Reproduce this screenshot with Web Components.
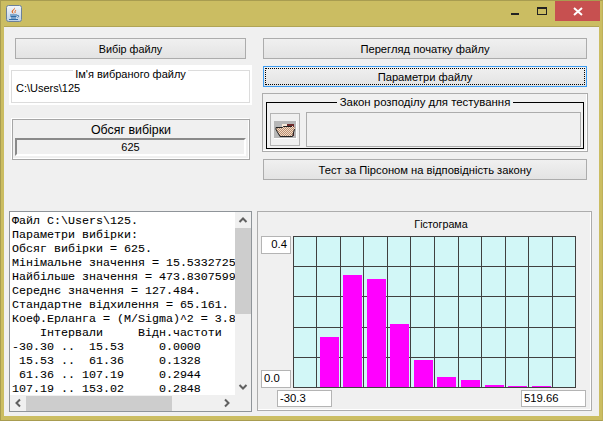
<!DOCTYPE html>
<html>
<head>
<meta charset="utf-8">
<title>Тест за Пірсоном</title>
<style>
  html, body { margin: 0; height: 100%; background: #f0f0f0; }
  body { font: 11px "Liberation Sans", Arial, sans-serif; color: #000; overflow: hidden; }
</style>
</head>
<body>
<app-window>
  <div slot="left">
    <swing-button class="pick">Вибір файлу</swing-button>
    <file-panel label="Ім'я вибраного файлу">C:\Users\125</file-panel>
    <size-panel label="Обсяг вибірки" value="625"></size-panel>
  </div>
  <div slot="right">
    <swing-button>Перегляд початку файлу</swing-button>
    <swing-button focused>Параметри файлу</swing-button>
    <law-panel label="Закон розподілу для тестування"></law-panel>
    <swing-button>Тест за Пірсоном на відповідність закону</swing-button>
  </div>
  <log-view slot="log"></log-view>
  <histogram-panel slot="chart" label="Гістограма"></histogram-panel>
</app-window>

<script>
  class AppWindow extends HTMLElement {
    constructor() {
      super();
      this.attachShadow({ mode: 'open' });
      this.shadowRoot.innerHTML = `
        <style>
          :host {
            display: flex;
            flex-direction: column;
            box-sizing: border-box;
            width: 603px;
            height: 421px;
            background: #cbbd62;
            border: 1px solid #a89c50;
            border-right-color: #bdb05a;
          }
          .titlebar {
            display: flex;
            justify-content: space-between;
            height: 25px;
            flex: none;
          }
          .app-icon { margin: 4px 0 0 5px; }
          .controls { display: flex; align-items: flex-start; margin-right: 2px; }
          .min { width: 8px; height: 2px; margin: 12px 18px 0 0; background: #222; }
          .max {
            box-sizing: border-box;
            width: 10px;
            height: 8px;
            margin: 6px 8px 0 0;
            border: 1px solid #222;
            border-top-width: 2px;
          }
          .close {
            display: flex;
            align-items: center;
            justify-content: center;
            width: 45px;
            height: 20px;
            background: #c75050;
          }
          .client {
            flex: 1;
            margin: 0 3px 4px 3px;
            padding: 11px 0 0 5px;
            background: #f0f0f0;
            border-top: 1px solid #b0a455;
            box-sizing: border-box;
          }
          .top { display: flex; gap: 10px; height: 173px; }
          .bottom { display: flex; gap: 5px; }
          ::slotted([slot=left]) { display: block; width: 243px; }
          ::slotted([slot=right]) { display: block; width: 326px; }
        </style>
        <div class="titlebar">
          <svg class="app-icon" width="16" height="17" viewBox="0 0 16 17">
            <defs>
              <linearGradient id="tile" x1="0" y1="0" x2="0" y2="1">
                <stop offset="0" stop-color="#f4f7fb"/>
                <stop offset="1" stop-color="#bcd0e6"/>
              </linearGradient>
            </defs>
            <rect x="0.5" y="0.5" width="15" height="16" rx="2" fill="url(#tile)" stroke="#6c8198"/>
            <path d="M8.5 2.5C10 4.5 6 5.5 7 7.5C7.5 8.5 8.5 8.8 8.5 9C7 8.5 5 7.5 5.7 6C6.3 4.8 8.5 4.2 8.5 2.5Z" fill="#e0641e"/>
            <path d="M10 5C9.2 6 8.6 6.6 9.2 8" fill="none" stroke="#e0641e"/>
            <path d="M4 10H11M4.5 11.5H10.5M5 13H10M3 14.5H12" stroke="#2f6ca8" fill="none"/>
            <path d="M11 10.5C13 10 13.5 11.5 11.5 12.5" stroke="#2f6ca8" fill="none"/>
          </svg>
          <div class="controls">
            <div class="min"></div>
            <div class="max"></div>
            <div class="close">
              <svg width="10" height="9" viewBox="0 0 10 9">
                <path d="M1 1L9 8M9 1L1 8" stroke="#fff" stroke-width="2" fill="none"/>
              </svg>
            </div>
          </div>
        </div>
        <div class="client">
          <div class="top">
            <slot name="left"></slot>
            <slot name="right"></slot>
          </div>
          <div class="bottom">
            <slot name="log"></slot>
            <slot name="chart"></slot>
          </div>
        </div>
      `;
    }
  }

  class SwingButton extends HTMLElement {
    constructor() {
      super();
      this.attachShadow({ mode: 'open' });
      this.shadowRoot.innerHTML = `
        <style>
          :host {
            display: flex;
            align-items: center;
            justify-content: center;
            box-sizing: border-box;
            height: 21px;
            margin: 0 1px 7px 1px;
            border: 1px solid #acacac;
            background: linear-gradient(#f0f0f0, #e3e3e3);
            position: relative;
            font-size: 11.2px;
          }
          :host(.pick) { margin: 0 6px 6px 6px; font-size: 10.8px; }
          :host([focused]) { border-color: #3c9bf0; margin-bottom: 6px; }
          .focus { display: none; }
          :host([focused]) .focus {
            display: block;
            position: absolute;
            inset: 1px;
            border: 1px dotted #000;
          }
        </style>
        <div class="focus"></div>
        <slot></slot>
      `;
    }
  }

  class FilePanel extends HTMLElement {
    constructor() {
      super();
      this.attachShadow({ mode: 'open' });
      this.shadowRoot.innerHTML = `
        <style>
          :host {
            display: block;
            box-sizing: border-box;
            height: 40px;
            padding: 5px 2px 2px;
            background: #fff;
          }
          .box {
            position: relative;
            box-sizing: border-box;
            height: 33px;
            padding: 11px 0 0 4px;
            border: 1px solid #dcdcdc;
          }
          .legend {
            position: absolute;
            top: -4px;
            left: 0;
            right: 0;
            text-align: center;
            line-height: 14px;
          }
          .legend span { background: #fff; padding: 0 2px; }
        </style>
        <div class="box">
          <div class="legend"><span>${this.getAttribute('label')}</span></div>
          <slot></slot>
        </div>
      `;
    }
  }

  class SizePanel extends HTMLElement {
    constructor() {
      super();
      this.attachShadow({ mode: 'open' });
      this.shadowRoot.innerHTML = `
        <style>
          :host {
            display: block;
            box-sizing: border-box;
            height: 41px;
            margin: 14px 2px 0 3px;
            padding: 0 2px 0 2px;
            border: 1px solid #a6a6a6;
            box-shadow: -1px -1px 0 #fff, inset -1px -1px 0 #fff;
          }
          .label { height: 18px; line-height: 20px; text-align: center; font-size: 12.4px; }
          .bar {
            box-sizing: border-box;
            height: 18px;
            margin-right: 1px;
            line-height: 15px;
            text-align: center;
            border: 2px solid;
            border-color: #8a8a8a #fff #fff #8a8a8a;
          }
        </style>
        <div class="label">${this.getAttribute('label')}</div>
        <div class="bar">${this.getAttribute('value')}</div>
      `;
    }
  }

  class LawPanel extends HTMLElement {
    constructor() {
      super();
      this.attachShadow({ mode: 'open' });
      this.shadowRoot.innerHTML = `
        <style>
          :host {
            display: block;
            box-sizing: border-box;
            height: 59px;
            margin-bottom: 7px;
            padding: 8px 3px 0 3px;
            border: 1px solid #acacac;
            box-shadow: inset -1px -1px 0 #fff;
          }
          .box {
            position: relative;
            display: flex;
            align-items: center;
            gap: 6px;
            box-sizing: border-box;
            height: 47px;
            padding: 8px 2px 0 3px;
            border: 1px solid #000;
          }
          .legend {
            position: absolute;
            top: -8px;
            left: 0;
            right: 0;
            text-align: center;
            line-height: 14px;
            font-size: 11.4px;
          }
          .legend span { background: #f0f0f0; padding: 0 3px; }
          .icon-btn {
            display: flex;
            align-items: center;
            justify-content: center;
            box-sizing: border-box;
            width: 30px;
            height: 33px;
            border: 1px solid #b4b4b4;
          }
          .field { flex: 1; height: 35px; box-sizing: border-box; border: 1px solid #acacac; }
        </style>
        <div class="box">
          <div class="legend"><span>${this.getAttribute('label')}</span></div>
          <div class="icon-btn">
            <svg width="23" height="18" viewBox="0 0 23 18" shape-rendering="crispEdges">
              <defs>
                <pattern id="dither" width="2" height="2" patternUnits="userSpaceOnUse">
                  <rect width="2" height="2" fill="#f3dcc6"/>
                  <rect width="1" height="1" fill="#b98f73"/>
                  <rect x="1" y="1" width="1" height="1" fill="#b98f73"/>
                </pattern>
              </defs>
              <rect width="23" height="18" fill="#b7b7b7"/>
              <rect x="22" width="1" height="18" fill="#fff"/>
              <rect y="17" width="23" height="1" fill="#fff"/>
              <path d="M13 3H20V15H19V5H13Z" fill="#6e2a2a"/>
              <path d="M8 3H13V5H19V14H8Z" fill="#f5e8d8"/>
              <path d="M2 6.5H8L9 5H18V6L21 6V8L18 15H6L2 9Z" fill="url(#dither)"/>
              <path d="M2 8.5L6 15.5H18.5L20.5 8M2 8.5V6.5H8.5L9.5 5.5H18" fill="none" stroke="#222" shape-rendering="auto"/>
            </svg>
          </div>
          <div class="field"></div>
        </div>
      `;
    }
  }

  class LogView extends HTMLElement {
    constructor() {
      super();
      this.attachShadow({ mode: 'open' });
      const lines = [
        'Файл C:\\Users\\125.',
        'Параметри вибірки:',
        'Обсяг вибірки = 625.',
        'Мінімальне значення = 15.5332725',
        'Найбільше значення = 473.8307599',
        'Середнє значення = 127.484.',
        'Стандартне відхилення = 65.161.',
        'Коеф.Ерланга = (M/Sigma)^2 = 3.8',
        '    Інтервали     Відн.частоти',
        '-30.30 ..  15.53     0.0000',
        ' 15.53 ..  61.36     0.1328',
        ' 61.36 .. 107.19     0.2944',
        '107.19 .. 153.02     0.2848'
      ];
      this.shadowRoot.innerHTML = `
        <style>
          :host {
            display: grid;
            grid-template-columns: 225px 16px;
            grid-template-rows: 183px 16px;
            box-sizing: border-box;
            width: 243px;
            height: 201px;
            border: 1px solid #8f9499;
            background: #f0f0f0;
          }
          pre {
            margin: 0;
            padding: 2px 0 0 2px;
            overflow: hidden;
            background: #fff;
            font: 11.67px/14px "Liberation Mono", "Courier New", monospace;
            -webkit-text-stroke: 0.08px #000;
          }
          .v, .h { display: flex; align-items: center; justify-content: space-between; }
          .v { flex-direction: column; }
          .v .thumb { width: 16px; height: 86px; margin: 0 0 auto; background: #cdcdcd; }
          .h .thumb { width: 146px; height: 15px; margin: 0 auto 0 0; background: #cdcdcd; }
          .arrow { flex: none; width: 16px; height: 16px; display: block; }
        </style>
        <pre>${lines.join('\n')}</pre>
        <div class="v">
          <svg class="arrow" viewBox="0 0 16 16"><path d="M4.5 10L8 6.5L11.5 10" fill="none" stroke="#606060" stroke-width="2"/></svg>
          <div class="thumb"></div>
          <svg class="arrow" viewBox="0 0 16 16"><path d="M4.5 6L8 9.5L11.5 6" fill="none" stroke="#606060" stroke-width="2"/></svg>
        </div>
        <div class="h">
          <svg class="arrow" viewBox="0 0 16 16"><path d="M10 4.5L6.5 8L10 11.5" fill="none" stroke="#606060" stroke-width="2"/></svg>
          <div class="thumb"></div>
          <svg class="arrow" viewBox="0 0 16 16"><path d="M6 4.5L9.5 8L6 11.5" fill="none" stroke="#606060" stroke-width="2"/></svg>
        </div>
        <div></div>
      `;
    }
  }

  class HistogramPanel extends HTMLElement {
    constructor() {
      super();
      this.attachShadow({ mode: 'open' });
      // pixel columns and rows of the grid, measured from the plot's top left corner
      const cols = [0, 23, 47, 70, 94, 117, 141, 165, 188, 212, 235, 259, 282];
      const rows = [0, 30, 60, 91, 121, 151];
      const bars = [
        [27, 101], [50, 39], [74, 43], [97, 88], [121, 124],
        [144, 141], [168, 144], [192, 149], [215, 150], [239, 150]
      ];
      const grid = cols.map(x => `<rect x="${x}" y="0" width="1" height="152" fill="#404040"/>`).join('')
        + rows.map(y => `<rect x="0" y="${y}" width="283" height="1" fill="#404040"/>`).join('');
      const rects = bars.map(([x, y]) => `<rect x="${x}" y="${y}" width="19" height="${151 - y}" fill="#ff00ff"/>`).join('');
      this.shadowRoot.innerHTML = `
        <style>
          :host {
            display: block;
            box-sizing: border-box;
            width: 335px;
            height: 200px;
            padding: 0 0 0 3px;
            border: 1px solid #acacac;
            box-shadow: inset -1px -1px 0 #fff;
          }
          .title { height: 24px; line-height: 25px; padding-left: 30px; text-align: center; font-size: 10.7px; }
          .plot-row { display: flex; gap: 2px; height: 152px; }
          .y { display: flex; flex-direction: column; justify-content: space-between; width: 30px; }
          .lbl {
            box-sizing: border-box;
            background: #fff;
            border: 1px solid #b4b4b4;
            line-height: 15px;
            font-size: 11.3px;
          }
          .y .lbl { height: 18px; padding: 0 2px; }
          .y .lbl.top { text-align: right; padding-right: 3px; }
          svg { display: block; }
          .x { display: flex; justify-content: space-between; margin: 2px 5px 0 16px; }
          .x .lbl { width: 55px; height: 17px; padding-left: 2px; }
          .x .lbl.wide { width: 65px; }
        </style>
        <div class="title">${this.getAttribute('label')}</div>
        <div class="plot-row">
          <div class="y"><div class="lbl top">0.4</div><div class="lbl">0.0</div></div>
          <svg width="283" height="152" viewBox="0 0 283 152" shape-rendering="crispEdges">
            <rect width="283" height="152" fill="#d2f7f7"/>
            ${grid}${rects}
          </svg>
        </div>
        <div class="x"><div class="lbl">-30.3</div><div class="lbl wide">519.66</div></div>
      `;
    }
  }

  customElements.define('app-window', AppWindow);
  customElements.define('swing-button', SwingButton);
  customElements.define('file-panel', FilePanel);
  customElements.define('size-panel', SizePanel);
  customElements.define('law-panel', LawPanel);
  customElements.define('log-view', LogView);
  customElements.define('histogram-panel', HistogramPanel);
</script>
</body>
</html>
